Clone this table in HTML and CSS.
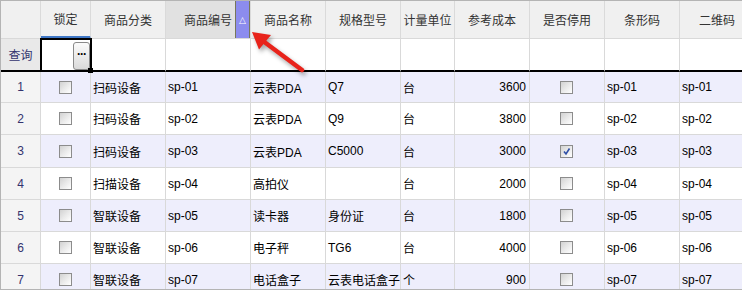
FILE: index.html
```html
<!DOCTYPE html>
<html lang="zh-CN">
<head>
<meta charset="utf-8">
<title>商品列表</title>
<link rel="stylesheet" href="styles.css">
</head>
<body>
<div class="frame">
  <div class="grid">
    <div class="hc corner"></div>
    <div class="hc active">锁定</div>
    <div class="hc">商品分类</div>
    <div class="hc sorted">商品编号<span class="sort">&#9651;</span></div>
    <div class="hc">商品名称</div>
    <div class="hc">规格型号</div>
    <div class="hc">计量单位</div>
    <div class="hc">参考成本</div>
    <div class="hc">是否停用</div>
    <div class="hc">条形码</div>
    <div class="hc">二维码</div>

    <div class="qc rn">查询</div>
    <div class="qc editcell"><div class="editor"><span class="btn">···</span><span class="handle"></span></div></div>
    <div class="qc"></div><div class="qc"></div><div class="qc"></div><div class="qc"></div>
    <div class="qc"></div><div class="qc"></div><div class="qc"></div><div class="qc"></div><div class="qc"></div>

    <div class="c rn">1</div><div class="c odd ck"><span class="box"></span></div><div class="c odd">扫码设备</div><div class="c odd">sp-01</div><div class="c odd">云表PDA</div><div class="c odd">Q7</div><div class="c odd">台</div><div class="c odd num">3600</div><div class="c odd ck"><span class="box"></span></div><div class="c odd">sp-01</div><div class="c odd">sp-01</div>

    <div class="c rn">2</div><div class="c ck"><span class="box"></span></div><div class="c">扫码设备</div><div class="c">sp-02</div><div class="c">云表PDA</div><div class="c">Q9</div><div class="c">台</div><div class="c num">3800</div><div class="c ck"><span class="box"></span></div><div class="c">sp-02</div><div class="c">sp-02</div>

    <div class="c rn">3</div><div class="c odd ck"><span class="box"></span></div><div class="c odd">扫码设备</div><div class="c odd">sp-03</div><div class="c odd">云表PDA</div><div class="c odd">C5000</div><div class="c odd">台</div><div class="c odd num">3000</div><div class="c odd ck"><span class="box checked"><svg viewBox="0 0 11 11" width="11" height="11"><path d="M3 5.5 L5 8 L8.5 2.5" fill="none" stroke="#2f4fa6" stroke-width="1.6"/></svg></span></div><div class="c odd">sp-03</div><div class="c odd">sp-03</div>

    <div class="c rn">4</div><div class="c ck"><span class="box"></span></div><div class="c">扫描设备</div><div class="c">sp-04</div><div class="c">高拍仪</div><div class="c"></div><div class="c">台</div><div class="c num">2000</div><div class="c ck"><span class="box"></span></div><div class="c">sp-04</div><div class="c">sp-04</div>

    <div class="c rn">5</div><div class="c odd ck"><span class="box"></span></div><div class="c odd">智联设备</div><div class="c odd">sp-05</div><div class="c odd">读卡器</div><div class="c odd">身份证</div><div class="c odd">台</div><div class="c odd num">1800</div><div class="c odd ck"><span class="box"></span></div><div class="c odd">sp-05</div><div class="c odd">sp-05</div>

    <div class="c rn">6</div><div class="c ck"><span class="box"></span></div><div class="c">智联设备</div><div class="c">sp-06</div><div class="c">电子秤</div><div class="c">TG6</div><div class="c">台</div><div class="c num">4000</div><div class="c ck"><span class="box"></span></div><div class="c">sp-06</div><div class="c">sp-06</div>

    <div class="c rn">7</div><div class="c odd ck"><span class="box"></span></div><div class="c odd">智联设备</div><div class="c odd">sp-07</div><div class="c odd">电话盒子</div><div class="c odd">云表电话盒子</div><div class="c odd">个</div><div class="c odd num">900</div><div class="c odd ck"><span class="box"></span></div><div class="c odd">sp-07</div><div class="c odd">sp-07</div>
  </div>
  <svg class="arrow" width="742" height="290" viewBox="0 0 742 290">
    <g class="arrow-g">
      <line x1="302" y1="70" x2="263" y2="41" stroke="#e8231b" stroke-width="4.5" stroke-linecap="round"/>
      <polygon points="252,32 259,49.5 271,35" fill="#e8231b"/>
    </g>
  </svg>
</div>
</body>
</html>
```
FILE: styles.css
```css
* { box-sizing: border-box; }
html, body { margin: 0; padding: 0; background: #fff; }
body {
  font-family: "Liberation Sans", "Noto Sans CJK SC", sans-serif;
  font-size: 12px;
  color: #000;
}
.frame {
  position: relative;
  width: 742px;
  height: 290px;
  overflow: hidden;
  border: 1px solid #b4b4b4;
  border-right: none;
}
.grid {
  display: grid;
  grid-template-columns: 40px 50px 75px 85px 75px 75px 54px 75px 75px 75px 75px;
  grid-template-rows: 38px 33px 31px 32px 33px 32px 32px 32px 32px;
}
.hc, .qc, .c {
  border-right: 1px solid #d9d9d9;
  border-bottom: 1px solid #d9d9d9;
  display: flex;
  align-items: center;
  white-space: nowrap;
  overflow: hidden;
}
.hc {
  background: #f0f0f0;
  color: #333;
  justify-content: center;
  border-right-color: #dadada;
  position: relative;
}
.hc.active { border-bottom: 3px solid #3f77c6; }
.hc.sorted { background: #e1e1e1; overflow: visible; }
.sort {
  position: absolute;
  right: 0;
  top: 0;
  bottom: 0;
  width: 15px;
  background: #8c8cee;
  border-left: 1px solid #77775a;
  border-right: 1px solid #77775a;
  color: #fff;
  font-family: "DejaVu Sans", sans-serif;
  font-size: 9px;
  display: flex;
  align-items: center;
  justify-content: center;
}
.qc {
  background: #fff;
  border-bottom: 2px solid #000;
}
.qc.rn { background: #e9e9e9; border-bottom: 2px solid #000; }
.rn {
  justify-content: center;
  background: #f4f4f4;
  color: #33336e;
}
.c { padding: 0 3px 0 2px; }
.c.rn { padding: 0; }
.odd { background: #eeeefc; }
.num { justify-content: flex-end; }
.ck { justify-content: center; }
.box {
  width: 13px;
  height: 13px;
  border: 1px solid #8c8c8c;
  background: linear-gradient(135deg, #d2d2d2 0%, #ececec 55%, #ffffff 100%);
  display: flex;
  align-items: center;
  justify-content: center;
}
.editcell { position: relative; overflow: visible; }
.editor {
  position: absolute;
  left: -1px;
  top: -1px;
  width: 52px;
  height: 34px;
  border: 2px solid #000;
  background: #fff;
  z-index: 2;
}
.btn {
  position: absolute;
  right: 0;
  top: 2px;
  bottom: 0;
  width: 17px;
  border: 1px solid #8a8a8a;
  border-radius: 3px;
  background: linear-gradient(#fbfbfb, #dadada);
  font-weight: bold;
  font-size: 12px;
  line-height: 22px;
  text-align: center;
  letter-spacing: -1px;
  color: #000;
}
.handle {
  position: absolute;
  right: -3px;
  bottom: -3px;
  width: 5px;
  height: 5px;
  background: #000;
}
.arrow {
  position: absolute;
  left: -1px;
  top: -1px;
  pointer-events: none;
  z-index: 5;
}
.arrow-g { filter: drop-shadow(2px 3px 2px rgba(0,0,0,0.35)); }
```
